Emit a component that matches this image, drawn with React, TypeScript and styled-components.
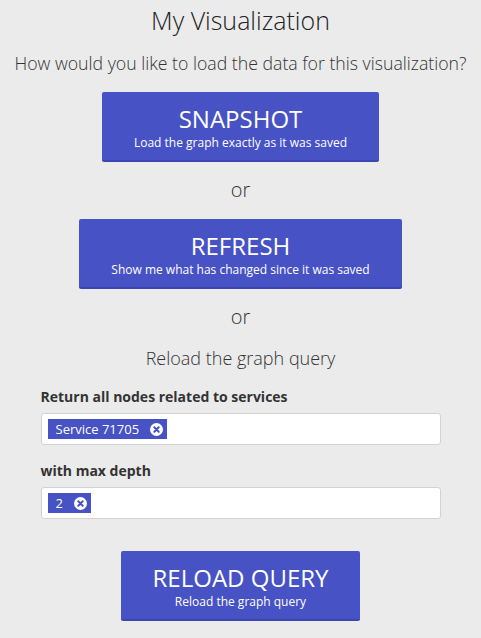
import React from 'react';
import styled, { createGlobalStyle } from 'styled-components';

const GlobalStyle = createGlobalStyle`
  html, body {
    margin: 0;
    padding: 0;
    background: #ebebeb;
    font-family: 'Open Sans', 'Liberation Sans', sans-serif;
    color: #333;
  }
`;

const Page = styled.div`
  display: flex;
  flex-direction: column;
  align-items: center;
  text-align: center;
  padding-top: 1px;
  min-height: 638px;
  box-sizing: border-box;
`;

const Title = styled.h1`
  margin: 0;
  font-size: 25px;
  line-height: 38px;
  font-weight: 300;
  color: #222;
`;

const Lead = styled.p<{ $top: number; $size?: number }>`
  margin: ${p => p.$top}px 0 0;
  font-size: ${p => p.$size ?? 18}px;
  line-height: 28px;
  font-weight: 300;
  color: #333;
  white-space: nowrap;
`;

const ActionButton = styled.button<{ $top: number }>`
  margin-top: ${p => p.$top}px;
  display: flex;
  flex-direction: column;
  align-items: center;
  padding: 11px 32px 9px;
  border: none;
  border-bottom: 2px solid #3c46b0;
  border-radius: 2px;
  background: #4752c4;
  color: #fff;
  font-family: inherit;
  cursor: pointer;
`;

const ButtonTitle = styled.span`
  font-size: 24px;
  line-height: 32px;
  font-weight: 400;
`;

const ButtonSub = styled.span`
  font-size: 12px;
  line-height: 16px;
  white-space: nowrap;
`;

const Form = styled.div`
  width: 400px;
  margin-top: 15px;
  text-align: left;
`;

const Label = styled.div<{ $top: number }>`
  margin-top: ${p => p.$top}px;
  margin-bottom: 6px;
  font-size: 14px;
  line-height: 20px;
  font-weight: 700;
  color: #333;
`;

const TagInput = styled.div`
  display: flex;
  align-items: center;
  gap: 4px;
  height: 32px;
  box-sizing: border-box;
  padding: 5px 6px;
  background: #fff;
  border: 1px solid #d2d2d2;
  border-radius: 3px;
`;

const Tag = styled.span`
  display: inline-flex;
  align-items: center;
  gap: 11px;
  height: 20px;
  padding: 0 4px 0 8px;
  background: #4752c4;
  color: #fff;
  font-size: 13px;
  line-height: 20px;
`;

const RemoveIcon = () => (
  <svg width="13" height="13" viewBox="0 0 13 13">
    <circle cx="6.5" cy="6.5" r="6.5" fill="#fff" />
    <path d="M4.3 4.3 L8.7 8.7 M8.7 4.3 L4.3 8.7" stroke="#4752c4" strokeWidth="2" strokeLinecap="round" />
  </svg>
);

const App: React.FC = () => {
  return (
    <>
      <GlobalStyle />
      <Page>
        <Title>My Visualization</Title>
        <Lead $top={10} $size={17.7}>How would you like to load the data for this visualization?</Lead>

        <ActionButton $top={15}>
          <ButtonTitle>SNAPSHOT</ButtonTitle>
          <ButtonSub>Load the graph exactly as it was saved</ButtonSub>
        </ActionButton>

        <Lead $top={14} $size={20}>or</Lead>

        <ActionButton $top={15}>
          <ButtonTitle>REFRESH</ButtonTitle>
          <ButtonSub>Show me what has changed since it was saved</ButtonSub>
        </ActionButton>

        <Lead $top={14} $size={20}>or</Lead>
        <Lead $top={13}>Reload the graph query</Lead>

        <Form>
          <Label $top={0}>Return all nodes related to services</Label>
          <TagInput>
            <Tag>
              Service 71705
              <RemoveIcon />
            </Tag>
          </TagInput>
          <Label $top={16}>with max depth</Label>
          <TagInput>
            <Tag>
              2
              <RemoveIcon />
            </Tag>
          </TagInput>
        </Form>

        <ActionButton $top={32}>
          <ButtonTitle>RELOAD QUERY</ButtonTitle>
          <ButtonSub>Reload the graph query</ButtonSub>
        </ActionButton>
      </Page>
    </>
  );
};

export default App;
